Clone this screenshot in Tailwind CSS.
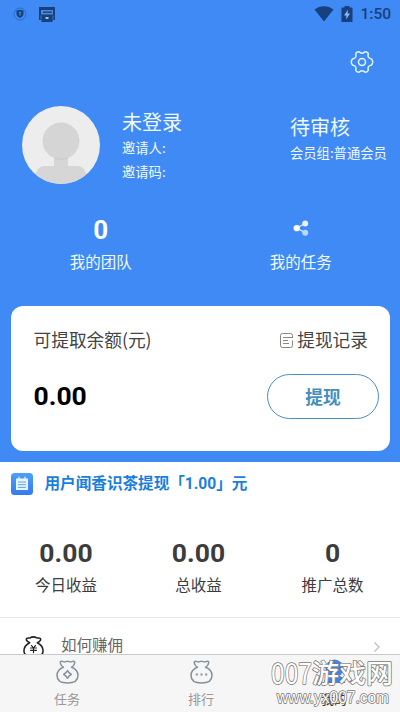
<!DOCTYPE html>
<html lang="zh-CN">
<head>
<meta charset="utf-8">
<title>我的</title>
<script src="https://cdn.jsdelivr.net/npm/@tailwindcss/browser@4"></script>
</head>
<body class="bg-white font-['Noto_Sans_CJK_SC',sans-serif]">
<div class="relative flex h-[712px] w-[400px] flex-col overflow-hidden">
  <header class="flex h-[462px] shrink-0 flex-col bg-[#3f8af4] text-[#effaff]">
    <!-- Status bar -->
    <div class="flex h-7 items-center px-[13px] text-[#17407f]">
      <svg class="size-[14px]" viewBox="0 0 14 14"><circle cx="7" cy="7" r="6" fill="none" stroke="#2866b5" stroke-width=".8"/><path d="M3.5 3.6 7 2.8l3.5.8v3.2c0 2-1.5 3.4-3.5 4.3-2-.9-3.5-2.3-3.5-4.3z" fill="currentColor"/><path d="M7 4.6a1.2 1.2 0 0 1 .5 2.2l.3 1.7H6.2l.3-1.7A1.2 1.2 0 0 1 7 4.600z" fill="#4a84ca"/></svg>
      <svg class="ml-[12px] h-[15px] w-4" viewBox="0 0 16 15"><path d="M0 0h16v13h-2.500v2h-11v-2H0z" fill="currentColor"/><path d="M2 3h12v4.500H2z" fill="#4e89d0"/><path d="M4 4.500h9v1.300H4z" fill="currentColor"/><path d="M6.500 10h3v2h-3z" fill="#9cc5f2"/><path d="M2 8.500v4M14 8.500v4" stroke="#4e89d0" stroke-width=".7"/></svg>
      <svg class="ml-auto h-4 w-5" viewBox="0 0 20 16"><path d="M.5 3.600C6-.9 14-.9 19.500 3.600L10 15.600z" fill="currentColor"/></svg>
      <svg class="ml-[7px] h-4 w-3" viewBox="0 0 12 16"><path d="M3.500 0h5v1.500H11q.5 0 .5.500v13.500q0 .5-.5.5H1q-.5 0-.5-.5V2q0-.5.5-.5h2.500z" fill="currentColor"/><path d="M7 3.500 3 9.500h2.500l-.5 4 4-6H6.500z" fill="#8dbaf5"/></svg>
      <span class="-mr-[4px] ml-[7px] pt-px font-['Roboto',sans-serif] text-[15.500px] font-medium">1:50</span>
    </div>
    <div class="flex h-[78px] justify-end pt-[21.500px] pr-[26px]">
      <svg class="size-6" viewBox="0 0 24 24" fill="none" stroke="#e4f7ff" stroke-width="1.500" stroke-linejoin="round"><path d="M8.700 1.800c1.100 0 1.400 1.500 3.300 1.500s2.200-1.500 3.300-1.500 3 1.100 3 2.200c0 1-.9 1.500.1 3.200 1 1.600 1.900 1.200 3 1.800 1.200.7 1.300 1.700 1.300 3s-.1 2.300-1.300 3c-1.100.6-2 .2-3 1.800-1 1.700-.1 2.200-.1 3.200 0 1.100-1.900 2.200-3 2.200s-1.400-1.500-3.300-1.500-2.200 1.500-3.300 1.500-3-1.100-3-2.200c0-1 .9-1.500-.1-3.200-1-1.600-1.900-1.200-3-1.800-1.200-.7-1.300-1.700-1.300-3s.1-2.300 1.300-3c1.100-.6 2-.2 3-1.800 1-1.700.1-2.200.1-3.200 0-1.100 1.900-2.200 3-2.200z"/><circle cx="12" cy="12" r="3.500"/></svg>
    </div>
    <!-- Profile -->
    <div class="flex h-[78px] pl-[22px]">
      <svg class="size-[78px] shrink-0" viewBox="0 0 78 78"><clipPath id="face"><circle cx="39" cy="39" r="39"/></clipPath><g clip-path="url(#face)"><path d="M0 0h78v78H0z" fill="#ededed"/><path d="M32 48h14v12h9c6 0 9 3 12 18H11c3-15 6-18 12-18h9z" fill="#d6d6d6"/><circle cx="39" cy="35" r="18.500" fill="#d5d5d5"/><path d="M32 52.100a18.500 18.500 0 0 0 14 0" fill="none" stroke="#c8c8c8" stroke-width=".8"/></g></svg>
      <div class="ml-[22px] w-[168px]">
        <div class="h-[30px] text-[20px] leading-[32px]">未登录</div>
        <div class="h-6 text-[13.300px] leading-6">邀请人:</div>
        <div class="h-6 text-[13.300px] leading-6">邀请码:</div>
      </div>
      <div class="pt-[6px] whitespace-nowrap">
        <div class="h-[30px] text-[20px] leading-[30px]">待审核</div>
        <div class="h-6 text-[13.300px] leading-[22px]">会员组:普通会员</div>
      </div>
    </div>
    <div class="grid h-[122px] grid-cols-2 pt-[32px] pl-px text-center">
      <div>
        <div class="h-[30px] font-['Roboto',sans-serif] text-[26px] leading-[28px] font-bold text-white">0</div>
        <div class="text-[15.500px] leading-[30px]">我的团队</div>
      </div>
      <div class="pl-px">
        <div class="flex h-[30px] items-start justify-center pt-[4px]"><svg class="size-4" viewBox="0 0 16 16"><path d="M12 3.500 3.500 8.200 12 12.500" fill="none" stroke="#d7eaff" stroke-width="1.300"/><circle cx="3.700" cy="8.200" r="3.100" fill="#fff"/><circle cx="12.200" cy="3.400" r="3" fill="#e5f2ff"/><circle cx="12.200" cy="12.700" r="3" fill="#b9d7ff"/></svg></div>
        <div class="text-[15.500px] leading-[30px]">我的任务</div>
      </div>
    </div>
    <!-- Balance -->
    <section class="mr-[10px] ml-[11px] h-[145px] rounded-xl bg-white pr-[11px] pl-[22.500px] text-[#444]">
      <div class="flex h-[68px] items-center justify-between pr-[11px] pb-[2px] text-[17.700px]">
        <span>可提取余额(元)</span>
        <span class="flex items-center"><svg class="mt-[3px] mr-[4px] h-[15px] w-[13px]" viewBox="0 0 13 15" fill="none" stroke="#8b8580"><path d="M12.500 5V2.500q0-2-2-2h-8q-2 0-2 2v10q0 2 2 2h8q2 0 2-2V7.500M3 4.500h9.500M3 7.500h5M3 10.500h6"/></svg>提现记录</span>
      </div>
      <div class="flex items-center justify-between">
        <span class="pb-[2px] font-['Roboto',sans-serif] text-[26.500px] font-bold text-black">0.00</span>
        <span class="flex h-[45px] w-[112px] items-center justify-center rounded-full border border-[#4a90bf] text-[17.700px] font-bold text-[#438fbe]">提现</span>
      </div>
    </section>
  </header>
  <!-- Announcement -->
  <div class="flex h-[44px] shrink-0 items-center pl-[11px]">
    <svg class="size-[22px]" viewBox="0 0 22 22"><defs><linearGradient id="note" x2="0" y2="1"><stop stop-color="#4ba0f8"/><stop offset="1" stop-color="#347bec"/></linearGradient></defs><rect width="22" height="22" rx="3.500" fill="url(#note)"/><path d="M5 5.500h12V17H5z" fill="#e7f5ff"/><path d="M8 3.800v3M14 3.800v3" stroke="#e7f5ff" stroke-width="1.300"/><path d="M7 9h8M7 11.700h8M7 14.400h8" stroke="#5ba5ec"/></svg>
    <span class="ml-[11.500px] text-[15.600px] font-bold whitespace-nowrap text-[#1a7edd]">用户闻香识茶提现「<span class="font-['Roboto',sans-serif]">1.00</span>」元</span>
  </div>
  <div class="grid h-[111px] shrink-0 grid-cols-[132px_133px_135px] pt-[32px] text-center text-[#3c3c3c]">
    <div><div class="h-[31px] font-['Roboto',sans-serif] text-[26.500px] leading-[29px] font-bold">0.00</div><div class="text-[15.500px] leading-[30px]">今日收益</div></div>
    <div><div class="h-[31px] font-['Roboto',sans-serif] text-[26.500px] leading-[29px] font-bold">0.00</div><div class="text-[15.500px] leading-[30px]">总收益</div></div>
    <div><div class="h-[31px] font-['Roboto',sans-serif] text-[26.500px] leading-[29px] font-bold">0</div><div class="text-[15.500px] leading-[30px]">推广总数</div></div>
  </div>
  <div class="h-[37px] shrink-0 overflow-hidden border-t border-[#e6e6e6] pt-[12px]">
    <div class="flex pr-[20px] pl-[23px] text-[#666]">
      <svg class="mt-[6px] h-[22px] w-[21px] shrink-0" viewBox="0 0 22 23" fill="none" stroke="#222" stroke-width="1.600" stroke-linejoin="round"><path d="M7 7C3.500 5.500 3 3.500 4 2.500s3 0 3.500-.5S9 .9 11 .9s2.500.6 3.500 1.100 2.500-.5 3.500.5.500 3-3 4.500c4 2 6 5 6 8.500 0 4.500-4 6.500-10 6.500s-10-2-10-6.500C1 12 3 9 7 7z"/><path d="m8.500 9.500 2.500 2.800 2.500-2.800M7.500 12.500h7M7.500 15h7M11 12.300V18" stroke-width="1.200"/></svg>
      <span class="ml-[17px] text-[15.500px] leading-[28px]">如何赚佣</span>
      <svg class="mt-[12px] ml-auto h-[10px] w-[6px]" viewBox="0 0 6 10" fill="none" stroke="#c0c0c0" stroke-width="1.300"><path d="m.5.5 4.500 4.500-4.500 4.500"/></svg>
    </div>
  </div>
  <!-- Tabs -->
  <nav class="grid h-[58px] shrink-0 grid-cols-[134px_134px_132px] border-t border-[#c8c8c8] bg-[#f6f6f6] text-center text-[13px] text-[#999]">
    <div class="flex flex-col items-center pt-[5px]"><svg class="ml-px h-6 w-[23px]" viewBox="0 0 23 24" fill="none" stroke="#84929e" stroke-width="1.500" stroke-linejoin="round"><path d="M7.500 7.200C5 6 4 3 4.500 1.500 5.500.5 7.500 2 8.500 2s1.500-.8 3-.8 2 .8 3 .8 3-1.500 4-.5c.5 1.500-.5 4.500-3 5.700 4 1.500 6.500 4 6.500 8.300 0 5-4 7.500-10.500 7.500S1 20.500 1 15.500c0-4.300 2.500-6.800 6.500-8.300z"/><path d="m11.500 10.600 1.600 2.100 2.200 1.700-2.200 1.700-1.600 2.100-1.600-2.100-2.200-1.700 2.200-1.700z"/></svg><span class="mt-[5px] leading-5">任务</span></div>
    <div class="flex flex-col items-center pt-[5px]"><svg class="ml-px h-6 w-[23px]" viewBox="0 0 23 24" fill="none" stroke="#84929e" stroke-width="1.500" stroke-linejoin="round"><path d="M7.500 7.200C5 6 4 3 4.500 1.500 5.500.5 7.500 2 8.500 2s1.500-.8 3-.8 2 .8 3 .8 3-1.500 4-.5c.5 1.500-.5 4.500-3 5.700 4 1.500 6.500 4 6.500 8.300 0 5-4 7.500-10.500 7.500S1 20.500 1 15.500c0-4.300 2.500-6.800 6.500-8.300z"/><path d="M5.800 14.500h2M10.500 14.500h2M15.200 14.500h2" stroke-width="2"/></svg><span class="mt-[5px] leading-5">排行</span></div>
    <div class="flex flex-col items-center pt-[4px] text-[#333]"><svg class="h-[25px] w-[23px]" viewBox="0 0 23 25"><circle cx="11.500" cy="9.500" r="9" fill="#3c85ef"/><path d="M1 24c0-5 4-8 10.500-8S22 19 22 24z" fill="#3c85ef"/></svg><span class="mt-[5px] leading-5">我的</span></div>
  </nav>
  <!-- Site watermark -->
  <svg class="absolute top-[654px] left-[266px] h-[58px] w-[134px]" viewBox="0 0 134 58" fill="#fff" stroke="#777" stroke-width="1.500" paint-order="stroke" stroke-linejoin="round">
    <text x="5" y="30" textLength="41" lengthAdjust="spacingAndGlyphs" font-family="Noto Sans CJK SC, sans-serif" font-size="28">007</text>
    <text x="46" y="29" textLength="81" lengthAdjust="spacingAndGlyphs" font-family="Noto Sans CJK SC, sans-serif" font-size="26" font-weight="500">游戏网</text>
    <text x="11" y="49" textLength="112" lengthAdjust="spacingAndGlyphs" font-family="Liberation Sans, sans-serif" font-size="16">www.yx007.com</text>
  </svg>
</div>
</body>
</html>
